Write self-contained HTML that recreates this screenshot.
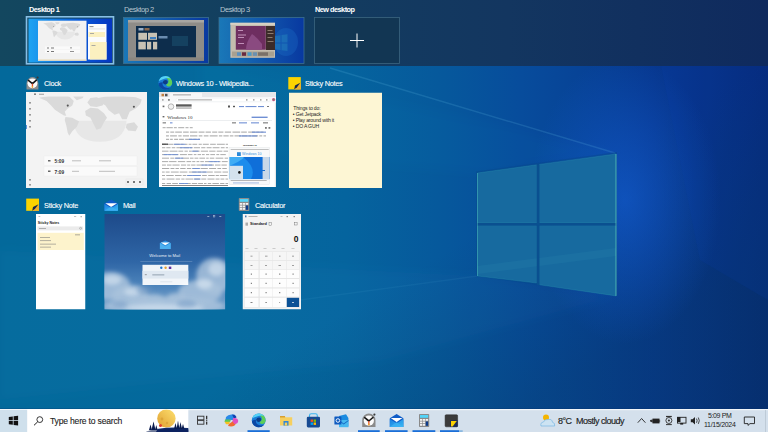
<!DOCTYPE html>
<html><head><meta charset="utf-8">
<style>
*{margin:0;padding:0;box-sizing:border-box}
html,body{width:768px;height:432px;overflow:hidden;background:#0a4f90;font-family:"Liberation Sans",sans-serif}
svg{position:absolute;left:0;top:0}
.dlabel{position:absolute;top:4.5px;font-size:7.5px;color:#b9c6cf;white-space:nowrap;letter-spacing:-0.45px}
.dlabel.b{color:#fff;font-weight:bold;letter-spacing:-0.5px;font-size:7.3px}
.wl{position:absolute;font-size:7.4px;color:#fff;white-space:nowrap;letter-spacing:-0.3px;-webkit-text-stroke:0.1px #fff}
#taskbar{position:absolute;left:0;top:409px;width:768px;height:23px;background:#d4e0ec}
</style></head><body>
<!-- WALLPAPER -->
<svg width="768" height="432" viewBox="0 0 768 432">
<defs>
<g id="edgeico">
<circle cx="7" cy="7" r="6.9" fill="#1a7ed8"/>
<path d="M7.6,0.2 A6.9,6.9 0 0 1 13.9,7.6 Q13,10.8 10.2,10.6 Q8.2,10.4 7.8,8.6 Q10,8 10.2,5.6 Q10.2,3.6 8.6,2.6 Z" fill="#5ccf58"/>
<path d="M0.4,5.2 Q1.8,0.4 7.2,0.2 Q10.8,0.3 12.2,2.6 Q9.6,1.8 6.8,2.6 Q3,3.6 0.4,5.2 Z" fill="#54d2f6"/>
<path d="M0.2,7.6 A6.9,6.9 0 0 0 12.4,11.4 Q8.4,13 5.6,11 Q3.6,9.2 4.4,6.4 Q2.2,6.4 0.2,7.6 Z" fill="#0b47a4"/>
<path d="M4.4,6.4 Q5,4.2 7.4,4.2 Q9.4,4.4 9.6,6.2 Q9.2,8.2 7.4,8.6 Q5.2,8.8 4.4,6.4 Z" fill="#0c3c88"/>
</g>
<g id="wmap">
<path d="M285,190 Q300,330 462,330 Q625,330 640,190 Z" fill="#e7e7e7"/>
<g fill="#dadada">
<path d="M60,38 L130,25 L220,15 L260,30 L290,60 L280,90 L250,110 L230,130 L240,158 L225,155 L200,140 L165,118 L140,90 L110,60 Z"/>
<path d="M280,15 L360,12 L350,40 L310,55 L290,35 Z"/>
<path d="M235,165 L280,170 L325,195 L310,230 L280,260 L260,290 L250,270 L240,220 L230,185 Z"/>
<path d="M380,70 L400,40 L440,35 L470,45 L500,60 L480,90 L440,100 L400,95 Z"/>
<path d="M365,125 L400,105 L450,110 L490,140 L510,170 L490,200 L470,240 L440,250 L420,210 L400,170 L370,155 Z"/>
<path d="M430,45 L500,30 L600,25 L700,35 L740,50 L730,80 L700,110 L660,130 L640,180 L610,180 L590,140 L560,150 L520,120 L500,90 Z"/>
<path d="M640,210 L690,200 L715,230 L700,260 L650,255 L635,235 Z"/>
</g>
<circle cx="250" cy="90" r="7" fill="#555"/>
<circle cx="688" cy="98" r="7" fill="#555"/>
</g>
<linearGradient id="g0" x1="0" y1="0" x2="768" y2="0" gradientUnits="userSpaceOnUse">
<stop offset="0" stop-color="#03699b"/>
<stop offset="0.3" stop-color="#04699d"/>
<stop offset="0.45" stop-color="#05649e"/>
<stop offset="0.57" stop-color="#06599c"/>
<stop offset="0.68" stop-color="#074c9c"/>
<stop offset="0.85" stop-color="#073890"/>
<stop offset="1" stop-color="#062a78"/>
</linearGradient>
<linearGradient id="gdark" x1="430" y1="260" x2="520" y2="410" gradientUnits="userSpaceOnUse">
<stop offset="0" stop-color="#063a5a" stop-opacity="0"/>
<stop offset="1" stop-color="#063a5a" stop-opacity="0.3"/>
</linearGradient>
<radialGradient id="glow" cx="625" cy="200" r="120" gradientUnits="userSpaceOnUse" gradientTransform="translate(625 200) scale(0.8 1.2) translate(-625 -200)">
<stop offset="0" stop-color="#1460d8" stop-opacity="0.6"/>
<stop offset="1" stop-color="#1460d8" stop-opacity="0"/>
</radialGradient>
<linearGradient id="beam" x1="0" y1="0" x2="620" y2="0" gradientUnits="userSpaceOnUse">
<stop offset="0" stop-color="#3ab0d0" stop-opacity="0.0"/>
<stop offset="0.7" stop-color="#3ab0d0" stop-opacity="0.06"/>
<stop offset="1" stop-color="#3ab0d0" stop-opacity="0.12"/>
</linearGradient>
</defs>
<rect width="768" height="432" fill="url(#g0)"/>
<rect width="768" height="432" fill="url(#gdark)"/>
<rect width="768" height="432" fill="url(#glow)"/>
<filter id="bblur" x="-10%" y="-30%" width="120%" height="160%"><feGaussianBlur stdDeviation="5"/></filter>
<polygon points="200,60 615,153 477.5,172 200,150" fill="#4ab0e0" fill-opacity="0.03" filter="url(#bblur)"/>
<polygon points="0,250 477.5,276 616,296 380,361 0,400" fill="#4ab0e0" fill-opacity="0.04" filter="url(#bblur)"/>
<polygon points="660,60 768,60 768,300 700,260" fill="#0a40c0" fill-opacity="0.12"/>
<line x1="330" y1="68" x2="615" y2="153" stroke="#6ac0e8" stroke-opacity="0.18" stroke-width="1.5"/>
<line x1="300" y1="300" x2="477.5" y2="276" stroke="#6ac0e8" stroke-opacity="0.08" stroke-width="1.5"/>
<polygon points="476,171.5 617,152 617,296 476,276" fill="#074a8c" fill-opacity="0.5"/>
<g fill="#176a9f" stroke="#45c2c0" stroke-opacity="0.3" stroke-width="0.6">
<polygon points="477.5,173 536.7,164.8 536.7,223 477.5,223"/>
<polygon points="539.4,164.4 616,154 616,223 539.4,223"/>
<polygon points="477.5,225.6 536.7,225.6 536.7,283 477.5,276"/>
<polygon points="539.4,225.6 616,225.6 616,295.9 539.4,284.8"/>
</g>
<polygon points="477.5,266 616,248 616,256 477.5,274" fill="#5ac8d0" fill-opacity="0.07"/>
<rect x="536.7" y="164.6" width="2.8" height="120.5" fill="#0a5090"/>
<rect x="477.2" y="223" width="139" height="2.6" fill="#0a5090"/>
<line x1="616" y1="154" x2="616" y2="295.9" stroke="#6ad8c0" stroke-opacity="0.6" stroke-width="1"/>
<line x1="477.5" y1="173" x2="477.5" y2="276" stroke="#5ad0c0" stroke-opacity="0.45" stroke-width="0.9"/>
</svg>
<!-- BAND -->
<svg width="768" height="66" viewBox="0 0 768 66">
<defs><linearGradient id="bandg" x1="0" y1="0" x2="768" y2="0" gradientUnits="userSpaceOnUse">
<stop offset="0" stop-color="#13475f"/><stop offset="0.66" stop-color="#133660"/><stop offset="1" stop-color="#0f2a5e"/>
</linearGradient></defs>
<rect width="768" height="66" fill="url(#bandg)"/>
</svg>

<div class="dlabel b" style="left:29px">Desktop 1</div>
<div class="dlabel" style="left:124px">Desktop 2</div>
<div class="dlabel" style="left:220px">Desktop 3</div>
<div class="dlabel b" style="left:315px">New desktop</div>

<!-- DESKTOP THUMBS -->
<svg width="768" height="66" viewBox="0 0 768 66">
<defs>
<linearGradient id="d1g" x1="0" y1="0" x2="1" y2="0"><stop offset="0" stop-color="#1ea4f2"/><stop offset="0.6" stop-color="#0a5ad8"/><stop offset="1" stop-color="#0536c0"/></linearGradient>
<linearGradient id="d2g" x1="0" y1="0" x2="1" y2="0"><stop offset="0" stop-color="#1a78b8"/><stop offset="1" stop-color="#0838a0"/></linearGradient>
</defs>
<!-- D1 -->
<rect x="26.5" y="16.8" width="87" height="47" fill="none" stroke="#86bfe6" stroke-width="1.6"/>
<rect x="28.5" y="18.6" width="83.5" height="44" fill="url(#d1g)"/>
<rect x="38" y="20.7" width="48.5" height="40" fill="#f2f2f2"/>
<use href="#wmap" transform="translate(39.9,21.5) scale(0.0546)"/>
<rect x="45" y="46.4" width="35" height="3" fill="#fafafa"/>
<rect x="45" y="50" width="35" height="3" fill="#fafafa"/>
<g fill="#777"><rect x="47" y="47.5" width="2" height="1"/><rect x="51" y="47.5" width="3" height="1"/><rect x="47" y="51" width="2" height="1"/><rect x="51" y="51" width="3" height="1"/><rect x="70" y="47.5" width="2" height="0.8"/><rect x="70" y="51" width="4" height="0.8"/></g>
<rect x="38" y="59.5" width="48.5" height="1.2" fill="#e8d8b0"/>
<rect x="88" y="24" width="18.5" height="35.5" fill="#fbfbfb"/>
<rect x="89.5" y="26.3" width="4" height="0.8" fill="#666"/>
<rect x="89" y="28.3" width="16" height="1.2" fill="#e6e6e6"/>
<rect x="88.5" y="32" width="16.5" height="5" fill="#fbf0c0"/>
<rect x="90" y="33" width="4" height="0.8" fill="#999"/>
<rect x="90" y="42" width="16.5" height="17.5" fill="#fbf0c0"/>
<rect x="91.5" y="45" width="4" height="0.8" fill="#999"/>
<!-- D2 -->
<rect x="123.5" y="17.5" width="85" height="46" fill="url(#d2g)" stroke="#3c7090" stroke-width="0.8"/>
<rect x="128" y="20" width="76" height="40.7" fill="#8e8c88"/>
<rect x="128" y="20" width="76" height="2.5" fill="#a8a6a2"/>
<rect x="136" y="26" width="60" height="31.5" fill="#0d2d4c"/>
<rect x="138.5" y="28" width="5" height="2.5" fill="#9ab0c8"/>
<rect x="144.5" y="28" width="5" height="2.5" fill="#8a6a50"/>
<rect x="138.3" y="32.8" width="8.7" height="7" fill="#c8c2b4"/>
<rect x="148" y="32.8" width="9" height="7" fill="#c8c2b4"/>
<rect x="150" y="37" width="6" height="2" fill="#4080c0"/>
<rect x="158.5" y="36" width="9" height="2.5" fill="#6a8cb0"/>
<rect x="138.3" y="41.8" width="7.5" height="7.6" fill="#c8c2b4"/>
<rect x="147" y="41.8" width="4.2" height="7.6" fill="#c8c2b4"/>
<rect x="153" y="41.8" width="4.2" height="7.6" fill="#c8c2b4"/>
<rect x="172" y="36" width="16" height="10" fill="#1a4a6a" fill-opacity="0.7"/>
<rect x="128" y="57.5" width="76" height="3.2" fill="#8a8680"/>
<!-- D3 -->
<rect x="219" y="17.5" width="85" height="46" fill="url(#d2g)" stroke="#3c7090" stroke-width="0.8"/>
<ellipse cx="286" cy="42" rx="12" ry="14" fill="#2a8ae0" fill-opacity="0.2"/>
<g fill="#2a90c0" fill-opacity="0.4"><polygon points="275,36 280.5,35.2 280.5,42.6 275,42.6"/><polygon points="281.5,35 287.5,34.2 287.5,42.6 281.5,42.6"/><polygon points="275,43.4 280.5,43.4 280.5,50 275,49.2"/><polygon points="281.5,43.4 287.5,43.4 287.5,51 281.5,50.2"/></g>
<rect x="230.4" y="22.8" width="44.6" height="35" fill="#c4bcae"/>
<rect x="230.4" y="22.8" width="44.6" height="2" fill="#d8d2c6"/>
<rect x="235.8" y="26" width="30" height="23.7" fill="#6e2e60"/>
<path d="M252,34 Q258,38 262,44 L262,49.7 L246,49.7 Q246,42 252,34 Z" fill="#8a4a80"/>
<g fill="#c090b8"><rect x="238" y="30" width="5" height="1"/><rect x="238" y="34.5" width="8" height="1"/><rect x="238" y="37" width="6" height="1"/><rect x="238" y="43" width="6" height="1"/></g>
<rect x="266" y="26" width="9" height="24" fill="#3c2c2a"/>
<g fill="#a09080"><rect x="267.5" y="30" width="5" height="0.8"/><rect x="267.5" y="33" width="6" height="0.8"/><rect x="267.5" y="37" width="5" height="0.8"/><rect x="267.5" y="41" width="6" height="0.8"/></g>
<rect x="232" y="51.5" width="42" height="5" fill="#a8a090"/>
<g><rect x="237" y="52.3" width="4" height="3.5" fill="#5a90c0"/><rect x="242" y="52.3" width="4" height="3.5" fill="#6a2a40"/><rect x="247.5" y="52.3" width="4" height="3.5" fill="#4a9ac8"/><rect x="253" y="52.3" width="4" height="3.5" fill="#6a90b0"/><rect x="258" y="52.3" width="10" height="3.5" fill="#7a7068"/></g>
<!-- New -->
<rect x="314.5" y="17.5" width="85" height="46" fill="#12344f" fill-opacity="0.7" stroke="#3c6680" stroke-width="0.8"/>
<line x1="350" y1="40.5" x2="364" y2="40.5" stroke="#fff" stroke-width="1"/>
<line x1="357" y1="33.5" x2="357" y2="47.5" stroke="#fff" stroke-width="1"/>
</svg>

<!-- WINDOW LABELS -->
<div class="wl" style="left:44px;top:79px">Clock</div>
<div class="wl" style="left:176px;top:79px">Windows 10 - Wikipedia...</div>
<div class="wl" style="left:305px;top:79px">Sticky Notes</div>
<div class="wl" style="left:44px;top:201px">Sticky Note</div>
<div class="wl" style="left:123px;top:201px">Mail</div>
<div class="wl" style="left:255px;top:201px">Calculator</div>

<!-- WINDOW THUMBS -->
<svg width="768" height="432" viewBox="0 0 768 432" font-family="Liberation Sans">
<defs>
<linearGradient id="wimg" x1="0" y1="0" x2="1" y2="1"><stop offset="0" stop-color="#8fd0f5"/><stop offset="0.45" stop-color="#1c8ee6"/><stop offset="1" stop-color="#0a58c0"/></linearGradient>
<linearGradient id="sky" x1="0" y1="0" x2="0" y2="1"><stop offset="0" stop-color="#1d4a8a"/><stop offset="0.5" stop-color="#2f66a6"/><stop offset="0.75" stop-color="#4d84bb"/><stop offset="1" stop-color="#7ea6cc"/></linearGradient>
<filter id="blur1" x="-20%" y="-20%" width="140%" height="140%"><feGaussianBlur stdDeviation="2.2"/></filter>
<filter id="blur05"><feGaussianBlur stdDeviation="0.5"/></filter>
</defs>

<!-- CLOCK -->
<svg x="26" y="92" width="121" height="96" viewBox="0 0 121 96">
<rect width="121" height="96" fill="#f3f3f3"/>

<use href="#wmap" transform="translate(4,0) scale(0.151)"/>
<rect x="0" y="0" width="121" height="4.5" fill="#f3f3f3"/>
<rect x="13" y="1.8" width="5" height="0.8" fill="#888"/>
<rect x="8" y="1.4" width="2" height="1.6" fill="#888"/>
<g fill="#9a9a9a">
<rect x="3" y="10" width="2" height="1.6"/><rect x="3" y="16" width="2" height="1.6"/><rect x="3" y="22" width="2" height="1.6"/><rect x="3" y="28" width="2" height="1.6"/><rect x="3" y="34" width="2" height="1.6"/><rect x="3" y="87" width="2" height="1.6"/><rect x="3" y="92" width="2" height="1.6"/>
</g>
<rect x="0" y="33" width="0.8" height="4" fill="#3a7bd5"/>
<rect x="18" y="64" width="93" height="9.5" fill="#fafafa" stroke="#ececec" stroke-width="0.4"/>
<rect x="18" y="74.5" width="93" height="9.5" fill="#fafafa" stroke="#ececec" stroke-width="0.4"/>
<g fill="#666"><rect x="22" y="68" width="2.5" height="1.5"/><rect x="22" y="78.5" width="2.5" height="1.5"/></g>
<text x="28.5" y="71" font-size="4.8" font-weight="bold" fill="#333">5:09</text>
<text x="28.5" y="81.5" font-size="4.8" font-weight="bold" fill="#333">7:09</text>
<g fill="#bdbdbd"><rect x="46" y="68.3" width="9" height="1"/><rect x="73" y="68.3" width="12" height="1"/><rect x="46" y="78.8" width="7" height="1"/><rect x="73" y="78.8" width="16" height="1"/></g>
<g fill="#777"><rect x="101" y="89" width="2" height="2"/><rect x="107" y="89" width="2" height="2"/><rect x="113" y="89" width="2" height="2"/></g>
<rect x="100" y="87" width="17" height="6" fill="none" stroke="#e2e2e2" stroke-width="0.4"/>
</svg>

<!-- WIKIPEDIA -->
<svg x="159" y="92" width="117" height="95" viewBox="0 0 117 95">
<rect width="117" height="95" fill="#fff"/>
<rect x="0" y="0" width="117" height="5.2" fill="#e6e8eb"/>
<rect x="10.6" y="0.8" width="32.4" height="4.4" fill="#f6f7f8"/>
<rect x="14" y="2.5" width="18" height="0.8" fill="#8a8a8a"/>
<rect x="2.5" y="1.8" width="2.5" height="2.5" fill="#c08040"/><rect x="6" y="1.8" width="2.5" height="2.5" fill="#555"/>
<rect x="0" y="5.2" width="117" height="5.2" fill="#f7f8f9"/>
<rect x="17" y="6.2" width="94" height="3.4" rx="1.7" fill="#ffffff" stroke="#e2e4e6" stroke-width="0.3"/>
<rect x="19" y="7.5" width="34" height="0.8" fill="#8a8a8a"/>
<g fill="#888"><rect x="3" y="7.3" width="1.6" height="1.2"/><rect x="9" y="7" width="1.8" height="1.8"/><rect x="87" y="7.3" width="1.5" height="1.2"/><rect x="94" y="7.3" width="1.5" height="1.2"/><rect x="101" y="7.3" width="1.5" height="1.2"/><rect x="107" y="7.3" width="1.5" height="1.2"/></g>
<circle cx="114.6" cy="7.6" r="1.6" fill="#d84a8a"/><circle cx="114.6" cy="7.6" r="0.8" fill="#4ab860"/>
<rect x="3.6" y="13.6" width="1.8" height="1.6" fill="#666"/>
<circle cx="12" cy="14.6" r="2.8" fill="#f0f0f0" stroke="#777" stroke-width="0.5"/>
<rect x="17" y="12.3" width="15.6" height="2.3" fill="#5a5a5a"/>
<rect x="17" y="15.5" width="15.6" height="1.1" fill="#9a9a9a"/>
<rect x="69" y="13.5" width="2" height="2" fill="#555"/><rect x="74" y="13.8" width="2" height="1.4" fill="#555"/>
<g fill="#6f8fd4"><rect x="80" y="14" width="5" height="1.1"/><rect x="86.5" y="14" width="11" height="1.1"/><rect x="99" y="14" width="6" height="1.1"/></g>
<rect x="108" y="14" width="2" height="1" fill="#777"/>
<rect x="3.6" y="24" width="1.8" height="1.4" fill="#666"/>
<text x="8.3" y="26.8" font-family="Liberation Serif" font-size="5" fill="#333">Windows 10</text>
<g fill="#6f8fd4"><rect x="92.6" y="24.6" width="16" height="1.4"/></g>
<line x1="3" y1="28.5" x2="113" y2="28.5" stroke="#d0d4d8" stroke-width="0.4"/>
<g fill="#777"><rect x="3.6" y="30.3" width="3.4" height="1.1"/><rect x="73" y="30.3" width="4" height="1.1"/></g>
<g fill="#6f8fd4"><rect x="11" y="30.3" width="2.5" height="1.1"/><rect x="80" y="30.3" width="8" height="1.1"/><rect x="92" y="30.3" width="8" height="1.1"/></g>
<rect x="104" y="30.3" width="5" height="1.1" fill="#777"/>
<g fill="#a8a8a8"><rect x="3.6" y="35.2" width="3.0" height="1.0"/><rect x="7.5" y="35.2" width="6.3" height="1.0"/><rect x="14.9" y="35.2" width="2.9" height="1.0"/><rect x="19.2" y="35.2" width="6.0" height="1.0"/><rect x="26.5" y="35.2" width="3.0" height="1.0"/><rect x="30.8" y="35.2" width="2.9" height="1.0"/></g>
<g fill="#777"><rect x="106" y="35" width="1.8" height="1.8"/><rect x="109.5" y="35" width="1.8" height="1.8"/></g>
<g fill="#a2a2a2"><rect x="7.0" y="39.6" width="3.1" height="1.0"/><rect x="11.3" y="39.6" width="3.9" height="1.0"/><rect x="16.2" y="39.6" width="6.7" height="1.0"/><rect x="24.1" y="39.6" width="5.6" height="1.0"/><rect x="30.9" y="39.6" width="7.5" height="1.0"/><rect x="39.6" y="39.6" width="5.9" height="1.0"/><rect x="46.6" y="39.6" width="5.3" height="1.0"/><rect x="53.2" y="39.6" width="5.0" height="1.0"/><rect x="59.3" y="39.6" width="5.1" height="1.0"/><rect x="65.8" y="39.6" width="6.3" height="1.0"/><rect x="73.5" y="39.6" width="7.7" height="1.0"/><rect x="82.2" y="39.6" width="5.6" height="1.0"/><rect x="89.2" y="39.6" width="7.1" height="1.0"/><rect x="97.3" y="39.6" width="3.2" height="1.0"/><rect x="101.5" y="39.6" width="2.9" height="1.0"/><rect x="7.0" y="43.4" width="2.9" height="1.0"/><rect x="11.1" y="43.4" width="6.8" height="1.0"/><rect x="19.3" y="43.4" width="3.3" height="1.0"/><rect x="23.9" y="43.4" width="6.1" height="1.0"/><rect x="31.0" y="43.4" width="7.4" height="1.0"/><rect x="39.7" y="43.4" width="3.7" height="1.0"/><rect x="44.8" y="43.4" width="4.7" height="1.0"/><rect x="50.7" y="43.4" width="7.9" height="1.0"/><rect x="59.9" y="43.4" width="3.4" height="1.0"/><rect x="64.4" y="43.4" width="5.3" height="1.0"/><rect x="70.8" y="43.4" width="3.6" height="1.0"/><rect x="75.5" y="43.4" width="6.5" height="1.0"/><rect x="82.9" y="43.4" width="5.5" height="1.0"/><rect x="89.5" y="43.4" width="2.6" height="1.0"/><rect x="93.2" y="43.4" width="5.9" height="1.0"/><rect x="100.3" y="43.4" width="2.9" height="1.0"/><rect x="104.5" y="43.4" width="2.5" height="1.0"/><rect x="7.0" y="46.8" width="3.1" height="1.0"/><rect x="11.1" y="46.8" width="2.7" height="1.0"/><rect x="15.1" y="46.8" width="4.0" height="1.0"/><rect x="20.1" y="46.8" width="4.8" height="1.0"/><rect x="26.2" y="46.8" width="7.0" height="1.0"/><rect x="34.3" y="46.8" width="3.3" height="1.0"/><rect x="39.0" y="46.8" width="2.0" height="1.0"/></g>
<g fill="#6f8fd4"><rect x="93" y="39.6" width="14" height="1.1"/><rect x="80" y="43.4" width="18" height="1.1"/><rect x="30" y="46.8" width="11" height="1.1"/></g>
<g fill="#a2a2a2"><rect x="3.0" y="51.8" width="4.3" height="0.9"/><rect x="8.3" y="51.8" width="6.1" height="0.9"/><rect x="15.3" y="51.8" width="5.4" height="0.9"/><rect x="21.8" y="51.8" width="2.8" height="0.9"/><rect x="25.8" y="51.8" width="2.7" height="0.9"/><rect x="29.6" y="51.8" width="2.9" height="0.9"/><rect x="33.4" y="51.8" width="4.8" height="0.9"/><rect x="39.6" y="51.8" width="3.2" height="0.9"/><rect x="43.8" y="51.8" width="6.0" height="0.9"/><rect x="51.1" y="51.8" width="5.7" height="0.9"/><rect x="57.9" y="51.8" width="7.9" height="0.9"/><rect x="66.7" y="51.8" width="2.3" height="0.9"/><rect x="3.0" y="55.3" width="3.3" height="0.9"/><rect x="7.3" y="55.3" width="4.2" height="0.9"/><rect x="12.8" y="55.3" width="3.5" height="0.9"/><rect x="17.4" y="55.3" width="6.0" height="0.9"/><rect x="24.5" y="55.3" width="5.5" height="0.9"/><rect x="31.0" y="55.3" width="2.8" height="0.9"/><rect x="34.8" y="55.3" width="6.2" height="0.9"/><rect x="42.2" y="55.3" width="4.2" height="0.9"/><rect x="47.6" y="55.3" width="5.0" height="0.9"/><rect x="53.6" y="55.3" width="6.9" height="0.9"/><rect x="61.8" y="55.3" width="3.8" height="0.9"/><rect x="66.8" y="55.3" width="2.2" height="0.9"/><rect x="3.0" y="58.7" width="6.5" height="0.9"/><rect x="10.6" y="58.7" width="7.9" height="0.9"/><rect x="19.4" y="58.7" width="4.8" height="0.9"/><rect x="25.5" y="58.7" width="3.3" height="0.9"/><rect x="30.0" y="58.7" width="2.7" height="0.9"/><rect x="33.9" y="58.7" width="6.7" height="0.9"/><rect x="41.8" y="58.7" width="7.3" height="0.9"/><rect x="50.2" y="58.7" width="6.3" height="0.9"/><rect x="57.7" y="58.7" width="5.7" height="0.9"/><rect x="64.5" y="58.7" width="4.5" height="0.9"/><rect x="3.0" y="62.2" width="5.1" height="0.9"/><rect x="9.3" y="62.2" width="2.8" height="0.9"/><rect x="13.4" y="62.2" width="6.1" height="0.9"/><rect x="20.9" y="62.2" width="7.0" height="0.9"/><rect x="28.9" y="62.2" width="4.6" height="0.9"/><rect x="34.8" y="62.2" width="2.6" height="0.9"/><rect x="38.6" y="62.2" width="3.4" height="0.9"/><rect x="42.9" y="62.2" width="2.8" height="0.9"/><rect x="47.0" y="62.2" width="3.2" height="0.9"/><rect x="51.3" y="62.2" width="4.7" height="0.9"/><rect x="57.3" y="62.2" width="2.9" height="0.9"/><rect x="61.3" y="62.2" width="5.5" height="0.9"/><rect x="3.0" y="65.7" width="7.0" height="0.9"/><rect x="11.3" y="65.7" width="4.0" height="0.9"/><rect x="16.5" y="65.7" width="4.5" height="0.9"/><rect x="22.3" y="65.7" width="7.8" height="0.9"/><rect x="31.0" y="65.7" width="3.5" height="0.9"/><rect x="35.5" y="65.7" width="3.8" height="0.9"/><rect x="40.4" y="65.7" width="5.7" height="0.9"/><rect x="47.2" y="65.7" width="2.5" height="0.9"/><rect x="50.8" y="65.7" width="4.5" height="0.9"/><rect x="56.6" y="65.7" width="7.7" height="0.9"/><rect x="65.6" y="65.7" width="3.4" height="0.9"/><rect x="3.0" y="69.2" width="6.2" height="0.9"/><rect x="10.1" y="69.2" width="7.4" height="0.9"/><rect x="18.9" y="69.2" width="7.3" height="0.9"/><rect x="27.5" y="69.2" width="4.7" height="0.9"/><rect x="33.2" y="69.2" width="3.1" height="0.9"/><rect x="37.5" y="69.2" width="2.8" height="0.9"/><rect x="41.3" y="69.2" width="3.6" height="0.9"/><rect x="45.9" y="69.2" width="4.4" height="0.9"/><rect x="51.2" y="69.2" width="2.5" height="0.9"/><rect x="54.7" y="69.2" width="3.1" height="0.9"/><rect x="58.9" y="69.2" width="2.6" height="0.9"/><rect x="62.8" y="69.2" width="5.9" height="0.9"/><rect x="3.0" y="72.6" width="3.9" height="0.9"/><rect x="8.0" y="72.6" width="4.5" height="0.9"/><rect x="13.4" y="72.6" width="7.2" height="0.9"/><rect x="22.0" y="72.6" width="5.1" height="0.9"/><rect x="28.2" y="72.6" width="3.0" height="0.9"/><rect x="32.1" y="72.6" width="4.4" height="0.9"/><rect x="37.5" y="72.6" width="7.1" height="0.9"/><rect x="45.6" y="72.6" width="2.6" height="0.9"/><rect x="49.6" y="72.6" width="5.4" height="0.9"/><rect x="56.0" y="72.6" width="5.5" height="0.9"/><rect x="62.4" y="72.6" width="5.4" height="0.9"/><rect x="3.0" y="76.1" width="7.2" height="0.9"/><rect x="11.5" y="76.1" width="3.9" height="0.9"/><rect x="16.5" y="76.1" width="3.4" height="0.9"/><rect x="21.2" y="76.1" width="5.4" height="0.9"/><rect x="27.9" y="76.1" width="4.3" height="0.9"/><rect x="33.3" y="76.1" width="7.0" height="0.9"/><rect x="41.6" y="76.1" width="7.2" height="0.9"/><rect x="50.1" y="76.1" width="7.0" height="0.9"/><rect x="58.4" y="76.1" width="3.7" height="0.9"/><rect x="63.3" y="76.1" width="4.5" height="0.9"/><rect x="3.0" y="79.6" width="2.7" height="0.9"/><rect x="6.7" y="79.6" width="3.9" height="0.9"/><rect x="11.9" y="79.6" width="7.8" height="0.9"/><rect x="20.7" y="79.6" width="7.7" height="0.9"/><rect x="29.8" y="79.6" width="7.8" height="0.9"/><rect x="38.6" y="79.6" width="3.7" height="0.9"/><rect x="43.4" y="79.6" width="3.6" height="0.9"/><rect x="47.9" y="79.6" width="5.9" height="0.9"/><rect x="55.2" y="79.6" width="7.1" height="0.9"/><rect x="63.5" y="79.6" width="5.5" height="0.9"/><rect x="3.0" y="83.1" width="3.0" height="0.9"/><rect x="7.2" y="83.1" width="7.5" height="0.9"/><rect x="16.0" y="83.1" width="6.6" height="0.9"/><rect x="23.8" y="83.1" width="3.5" height="0.9"/><rect x="28.5" y="83.1" width="4.3" height="0.9"/><rect x="34.2" y="83.1" width="7.8" height="0.9"/><rect x="43.1" y="83.1" width="4.7" height="0.9"/><rect x="49.2" y="83.1" width="6.5" height="0.9"/><rect x="56.7" y="83.1" width="3.2" height="0.9"/><rect x="60.8" y="83.1" width="7.5" height="0.9"/><rect x="3.0" y="86.6" width="3.3" height="0.9"/><rect x="7.6" y="86.6" width="7.9" height="0.9"/><rect x="16.7" y="86.6" width="4.4" height="0.9"/><rect x="22.3" y="86.6" width="3.2" height="0.9"/><rect x="26.5" y="86.6" width="7.8" height="0.9"/><rect x="35.5" y="86.6" width="5.4" height="0.9"/><rect x="42.3" y="86.6" width="4.9" height="0.9"/><rect x="48.5" y="86.6" width="7.0" height="0.9"/><rect x="56.6" y="86.6" width="3.9" height="0.9"/><rect x="61.5" y="86.6" width="3.8" height="0.9"/><rect x="66.5" y="86.6" width="2.5" height="0.9"/><rect x="3.0" y="91" width="3.2" height="0.9"/><rect x="7.6" y="91" width="4.4" height="0.9"/><rect x="13.2" y="91" width="5.7" height="0.9"/><rect x="20.2" y="91" width="4.8" height="0.9"/><rect x="26.4" y="91" width="5.3" height="0.9"/><rect x="32.8" y="91" width="5.4" height="0.9"/><rect x="39.1" y="91" width="4.9" height="0.9"/><rect x="45.0" y="91" width="2.5" height="0.9"/><rect x="48.8" y="91" width="3.4" height="0.9"/><rect x="53.4" y="91" width="6.5" height="0.9"/><rect x="61.1" y="91" width="4.3" height="0.9"/><rect x="66.5" y="91" width="2.5" height="0.9"/></g>
<g fill="#6f8fd4"><rect x="14.9" y="51.8" width="11.4" height="0.9"/><rect x="21.0" y="55.3" width="12.0" height="0.9"/><rect x="32.8" y="58.7" width="6.7" height="0.9"/><rect x="4.6" y="62.2" width="14.4" height="0.9"/><rect x="15.9" y="65.7" width="8.3" height="0.9"/><rect x="49.8" y="69.2" width="10.7" height="0.9"/><rect x="42.5" y="72.6" width="10.8" height="0.9"/><rect x="33.4" y="76.1" width="7.5" height="0.9"/><rect x="33.2" y="79.6" width="14.7" height="0.9"/><rect x="28.1" y="83.1" width="13.4" height="0.9"/><rect x="34.9" y="86.6" width="6.6" height="0.9"/><rect x="20" y="91" width="9" height="0.9"/></g>
<rect x="3" y="51.6" width="6" height="1.2" fill="#444"/>
<text x="91" y="54.2" font-size="2.4" font-weight="bold" fill="#333" text-anchor="middle">Windows 10</text>
<rect x="70" y="55.3" width="40.6" height="37.5" fill="#f8f9fa" stroke="#d8dadc" stroke-width="0.3"/>
<rect x="71.7" y="57.2" width="38" height="0.6" fill="#999"/>
<rect x="78" y="60.2" width="3.8" height="3.8" fill="#2a88d8"/>
<text x="83" y="63.4" font-size="3.6" fill="#3a94e0">Windows 10</text>
<rect x="70.6" y="65" width="40" height="22.1" fill="#1c8cec"/>
<path d="M70.6,65 L86,65 Q80,70 70.6,73.8 Z" fill="#48b4f6" fill-opacity="0.8"/>
<path d="M84,65 L110.6,65 L110.6,87.1 L92,87.1 Q98,76 84,65 Z" fill="#0a62d2" fill-opacity="0.7"/>
<rect x="103.6" y="65" width="7" height="22.1" fill="#c8d8e8"/>
<rect x="70.6" y="73.8" width="13.4" height="13.3" fill="#d4e2ee"/>
<circle cx="80.4" cy="80.4" r="1.3" fill="#111"/>
<rect x="103" y="78" width="3" height="1" fill="#1a70d0"/>
<g fill="#999"><rect x="71.7" y="88.3" width="36" height="0.7"/></g>
<g fill="#7f9fd8"><rect x="74" y="90.6" width="26" height="0.7"/></g>
<rect x="3" y="93" width="66" height="0.8" fill="#6a6a6a"/>
<rect x="115.8" y="10.5" width="1.2" height="84.5" fill="#e8e8e8"/>
</svg>

<!-- STICKY NOTES BIG -->
<svg x="289" y="92.5" width="93" height="95.5" viewBox="0 0 93 95.5">
<rect width="93" height="95.5" fill="#fdf6d4"/>
<g font-size="5.1" fill="#262626" letter-spacing="-0.17">
<text x="4.2" y="17.6">Things to do:</text>
<text x="3.8" y="23.4">• Get Jetpack</text>
<text x="3.8" y="29.2">• Play around with it</text>
<text x="3.8" y="35">• DO A GUH</text>
</g>
</svg>

<!-- STICKY NOTE SMALL -->
<svg x="36" y="214" width="49.5" height="95.5" viewBox="0 0 49.5 95.5">
<rect width="49.5" height="95.5" fill="#fff"/>
<g fill="#999"><rect x="2.5" y="2.4" width="1.8" height="0.6"/><rect x="38" y="2.4" width="2.2" height="0.6"/><rect x="44.5" y="2.2" width="1.4" height="1"/></g>
<text x="1.8" y="10" font-size="3.6" font-weight="bold" fill="#222">Sticky Notes</text>
<rect x="1.5" y="12.4" width="45.5" height="4" fill="#ebebeb"/>
<rect x="3" y="14.2" width="7" height="0.6" fill="#888"/>
<circle cx="44.6" cy="14.3" r="1" fill="none" stroke="#777" stroke-width="0.4"/>
<rect x="1.5" y="18.8" width="46.3" height="17.2" fill="#fdf3cc"/>
<rect x="39" y="20.6" width="5" height="0.6" fill="#777"/>
<g fill="#777"><rect x="4" y="23.3" width="10" height="0.55"/><rect x="4" y="26.5" width="11" height="0.55"/><rect x="4" y="29.8" width="16" height="0.55"/><rect x="4" y="32.8" width="11" height="0.55"/></g>
</svg>

<!-- MAIL -->
<svg x="104.3" y="214" width="121" height="95.5" viewBox="0 0 121 95.5">
<rect width="121" height="95.5" fill="url(#sky)"/>
<g fill="#a9c2dc" filter="url(#blur1)" fill-opacity="0.85">
<ellipse cx="6" cy="72" rx="20" ry="14"/>
<ellipse cx="26" cy="82" rx="18" ry="11"/>
<ellipse cx="110" cy="62" rx="18" ry="18"/>
<ellipse cx="96" cy="78" rx="22" ry="12"/>
<ellipse cx="60" cy="92" rx="60" ry="9"/>
<ellipse cx="48" cy="86" rx="14" ry="6"/>
<ellipse cx="72" cy="84" rx="10" ry="5"/>
</g>
<g fill="#e2ecf5" fill-opacity="0.55" filter="url(#blur1)">
<ellipse cx="112" cy="55" rx="8" ry="7"/>
<ellipse cx="100" cy="70" rx="8" ry="5"/>
<ellipse cx="8" cy="66" rx="9" ry="5"/>
<ellipse cx="28" cy="78" rx="8" ry="4"/>
<ellipse cx="60" cy="94" rx="40" ry="4"/>
</g>
<g fill="#6f98c4" fill-opacity="0.5" filter="url(#blur1)">
<ellipse cx="40" cy="76" rx="8" ry="4"/>
<ellipse cx="82" cy="90" rx="10" ry="4"/>
<ellipse cx="16" cy="90" rx="8" ry="3"/>
</g>
<g fill="#cfdaea"><rect x="103" y="2" width="2" height="0.6"/><rect x="109" y="1.6" width="1.6" height="1.4" fill="none" stroke="#cfdaea" stroke-width="0.4"/><rect x="115" y="2" width="2" height="0.6"/></g>
<path d="M55.6,29 L61,26.5 L66.4,29 L66.4,35 L55.6,35 Z" fill="#2a8fe0"/>
<path d="M55.6,29 L61,32.2 L66.4,29 L66.4,35 L55.6,35 Z" fill="#4cb0f0"/>
<path d="M56.5,28.6 L65.5,28.6 L61,31.3 Z" fill="#fff"/>
<text x="60.5" y="43" font-size="4.2" fill="#e8eef6" text-anchor="middle">Welcome to Mail</text>
<rect x="36" y="47.2" width="52" height="0.6" fill="#a8c0dc" fill-opacity="0.5"/>
<rect x="38.2" y="50.8" width="45.8" height="20.2" fill="#ffffff" fill-opacity="0.93"/>
<rect x="38.2" y="56.8" width="45.8" height="7.8" fill="#dfe8f1"/>
<circle cx="57" cy="53.8" r="1.2" fill="#1e78d0"/>
<circle cx="61.3" cy="53.8" r="1.2" fill="#e8a030"/>
<rect x="64.5" y="52.6" width="2.5" height="2.4" fill="#6030a0"/>
<rect x="40.5" y="60.5" width="2" height="0.6" fill="#666"/>
<rect x="48" y="60.5" width="12" height="0.8" fill="#8090a0"/>
<rect x="56" y="67.5" width="12" height="0.7" fill="#d4dbe3"/>
</svg>

<!-- CALCULATOR -->
<svg x="242.5" y="214" width="58.5" height="95.5" viewBox="0 0 58.5 95.5">
<rect width="58.5" height="95.5" fill="#f3f3f3"/>
<rect x="2.5" y="1.5" width="1.5" height="1.8" fill="#4a7ab0"/>
<rect x="6" y="2.2" width="9" height="0.6" fill="#888"/>
<g fill="#888"><rect x="38" y="2.2" width="2" height="0.5"/><rect x="44" y="2" width="1.5" height="1.2"/><rect x="51" y="2" width="1.5" height="1.2"/></g>
<g fill="#555"><rect x="3" y="8.8" width="2.5" height="0.5"/><rect x="3" y="9.8" width="2.5" height="0.5"/><rect x="3" y="10.8" width="2.5" height="0.5"/></g>
<text x="7.5" y="11.3" font-size="3.9" font-weight="bold" fill="#222">Standard</text>
<rect x="26.5" y="8.6" width="2.4" height="2.6" fill="none" stroke="#666" stroke-width="0.4"/>
<rect x="52" y="8.2" width="2.6" height="2.8" fill="none" stroke="#666" stroke-width="0.4"/>
<text x="56" y="28" font-size="8.5" font-weight="bold" fill="#111" text-anchor="end">0</text>
<g fill="#b0b0b0"><rect x="3" y="34.3" width="3" height="0.6"/><rect x="12" y="34.3" width="3" height="0.6"/><rect x="21" y="34.3" width="3" height="0.6"/><rect x="30" y="34.3" width="3" height="0.6"/><rect x="39" y="34.3" width="3" height="0.6"/><rect x="49" y="34.3" width="3" height="0.6"/></g>
<rect x="1.5" y="37.3" width="55.7" height="56.3" fill="#e6e6e6"/>
<g fill="#f6f6f6">
<rect x="2.1" y="37.9" width="13.9" height="8.3"/><rect x="17.2" y="37.9" width="12.8" height="8.3"/><rect x="30.4" y="37.9" width="13.5" height="8.3"/><rect x="44.3" y="37.9" width="12.3" height="8.3"/>
<rect x="2.1" y="47" width="13.9" height="8.5"/><rect x="17.2" y="47" width="12.8" height="8.5"/><rect x="30.4" y="47" width="13.5" height="8.5"/><rect x="44.3" y="47" width="12.3" height="8.5"/>
</g>
<g fill="#fdfdfd">
<rect x="2.1" y="56" width="13.9" height="8"/><rect x="17.2" y="56" width="12.8" height="8"/><rect x="30.4" y="56" width="13.5" height="8"/><rect x="44.3" y="56" width="12.3" height="8"/>
<rect x="2.1" y="65" width="13.9" height="8.4"/><rect x="17.2" y="65" width="12.8" height="8.4"/><rect x="30.4" y="65" width="13.5" height="8.4"/><rect x="44.3" y="65" width="12.3" height="8.4"/>
<rect x="2.1" y="74.5" width="13.9" height="8.1"/><rect x="17.2" y="74.5" width="12.8" height="8.1"/><rect x="30.4" y="74.5" width="13.5" height="8.1"/><rect x="44.3" y="74.5" width="12.3" height="8.1"/>
<rect x="2.1" y="83.8" width="13.9" height="9.2"/><rect x="17.2" y="83.8" width="12.8" height="9.2"/><rect x="30.4" y="83.8" width="13.5" height="9.2"/>
</g>
<rect x="44.3" y="83.8" width="12.3" height="9.2" fill="#0b5196"/>
<g fill="#666">
<rect x="8" y="41.8" width="2" height="0.6"/><rect x="22.5" y="41.8" width="2.5" height="0.6"/><rect x="36.5" y="41.8" width="1.5" height="0.6"/><rect x="49.5" y="41.8" width="2" height="0.6"/>
<rect x="8" y="51" width="2" height="0.6"/><rect x="22.5" y="51" width="2" height="0.6"/><rect x="36" y="51" width="2.5" height="0.6"/><rect x="49.5" y="51" width="2" height="0.6"/>
<rect x="8.3" y="59.6" width="1.2" height="1"/><rect x="23" y="59.6" width="1.2" height="1"/><rect x="36.6" y="59.6" width="1.2" height="1"/><rect x="50" y="59.6" width="1.2" height="1"/>
<rect x="8.3" y="68.8" width="1.2" height="1"/><rect x="23" y="68.8" width="1.2" height="1"/><rect x="36.6" y="68.8" width="1.2" height="1"/><rect x="50" y="68.8" width="1.2" height="1"/>
<rect x="8.3" y="78.2" width="1.2" height="1"/><rect x="23" y="78.2" width="1.2" height="1"/><rect x="36.6" y="78.2" width="1.2" height="1"/><rect x="50" y="78.2" width="1.2" height="1"/>
<rect x="8" y="88" width="2" height="0.8"/><rect x="23" y="88" width="1.2" height="1"/><rect x="36.8" y="88.2" width="0.8" height="0.8"/>
</g>
<rect x="49.5" y="88" width="2" height="0.8" fill="#dde8f3"/>
</svg>
</svg>

<!-- WINDOW ICONS -->
<svg width="768" height="432" viewBox="0 0 768 432">
<defs>
<linearGradient id="edgeg" x1="0" y1="0" x2="1" y2="1"><stop offset="0" stop-color="#37c0f0"/><stop offset="0.6" stop-color="#1a7ad8"/><stop offset="1" stop-color="#0c3f9a"/></linearGradient>
<linearGradient id="mailg" x1="0" y1="0" x2="1" y2="1"><stop offset="0" stop-color="#1a7ee0"/><stop offset="1" stop-color="#38b8f4"/></linearGradient>
</defs>
<!-- clock icon -->
<g id="clockico">
<path d="M26.5,83.5 A5.95,6.4 0 0 1 38.4,83.5 L38.4,89.6 L26.5,89.6 Z" fill="#8c8c8c"/>
<circle cx="37.6" cy="77.6" r="1.1" fill="#3a3a3a"/>
<circle cx="32.45" cy="83.3" r="4.9" fill="#fbfbfb"/>
<path d="M28.4,80.4 L32.45,83.6 L36.4,80.2" fill="none" stroke="#151515" stroke-width="1.6" stroke-linecap="round" stroke-linejoin="round"/>
<path d="M32.45,83.6 L32.45,87.6" stroke="#e4502a" stroke-width="1.3"/>
<path d="M32.45,86 L32.45,87.6" stroke="#f0b020" stroke-width="1.3"/>
</g>
<!-- edge -->
<use href="#edgeico" transform="translate(158.3,75.8)"/>
<!-- sticky notes icon -->
<rect x="288.3" y="77.1" width="12.5" height="12.3" fill="#fbd300"/>
<path d="M294.3,89.4 L300.8,83 L300.8,89.4 Z" fill="#eeae2e"/>
<path d="M294.2,89.3 L295,85.6 L300.3,82.8 L296.8,87.6 Z" fill="#17264e"/>
<rect x="26.2" y="198.6" width="12.8" height="12.2" fill="#fbd300"/>
<path d="M32.3,210.8 L39,204.4 L39,210.8 Z" fill="#eeae2e"/>
<path d="M32.2,210.7 L33,207 L38.5,204.2 L34.9,209 Z" fill="#17264e"/>
<!-- mail icon -->
<path d="M104.4,203.5 L111.2,199.4 L118,203.5 L118,210.8 L104.4,210.8 Z" fill="#0f5cc8"/>
<path d="M105.3,203.2 L117.1,203.2 L111.2,207 Z" fill="#ffffff"/>
<path d="M104.4,204 L111.2,208 L118,204 L118,210.8 L104.4,210.8 Z" fill="url(#mailg)"/>
<path d="M104.4,210.8 L111.2,206.5 L118,210.8 Z" fill="#3fb5f5" fill-opacity="0.7"/>
<!-- calc icon -->
<rect x="238.8" y="198" width="10.5" height="13" rx="0.8" fill="#8c8c8c"/>
<rect x="239.8" y="199" width="8.5" height="2.8" fill="#52d4f8"/>
<g fill="#f2f2f2"><rect x="239.8" y="203" width="2.4" height="1.8"/><rect x="242.8" y="203" width="2.4" height="1.8"/><rect x="245.8" y="203" width="2.4" height="1.8"/><rect x="239.8" y="205.5" width="2.4" height="1.8"/><rect x="242.8" y="205.5" width="2.4" height="1.8"/><rect x="239.8" y="208" width="2.4" height="1.8"/><rect x="242.8" y="208" width="2.4" height="1.8"/></g>
<rect x="245.8" y="205.5" width="2.4" height="4.3" fill="#0d3c8c"/>
</svg>

<!-- TASKBAR -->
<div id="taskbar"></div>
<svg width="768" height="432" viewBox="0 0 768 432">
<defs>
<linearGradient id="moong" x1="0" y1="1" x2="1" y2="0"><stop offset="0" stop-color="#e0a030"/><stop offset="1" stop-color="#fde070"/></linearGradient>
<linearGradient id="edgeg2" x1="0" y1="0" x2="1" y2="1"><stop offset="0" stop-color="#37c0f0"/><stop offset="0.6" stop-color="#1a7ad8"/><stop offset="1" stop-color="#0c3f9a"/></linearGradient>
<linearGradient id="mailg2" x1="0" y1="0" x2="1" y2="1"><stop offset="0" stop-color="#1a7ee0"/><stop offset="1" stop-color="#38b8f4"/></linearGradient>
<clipPath id="tbclip"><rect x="0" y="409.5" width="768" height="22.5"/></clipPath>
</defs>
<rect x="0" y="408.5" width="768" height="1" fill="#03306a" fill-opacity="0.5"/>
<rect x="0" y="409" width="768" height="1.2" fill="#f2f6fa"/>
<rect x="0" y="410" width="27.2" height="22" fill="#cfe0ec"/>
<rect x="27.2" y="409.2" width="161.1" height="22.8" fill="#ffffff"/>
<!-- start logo -->
<g fill="#111">
<path d="M8.8,417 L12.8,416.4 L12.8,420.2 L8.8,420.2 Z"/>
<path d="M13.6,416.3 L18.1,415.7 L18.1,420.2 L13.6,420.2 Z"/>
<path d="M8.8,421 L12.8,421 L12.8,424.8 L8.8,424.3 Z"/>
<path d="M13.6,421 L18.1,421 L18.1,425.4 L13.6,424.9 Z"/>
</g>
<!-- search icon -->
<circle cx="39.8" cy="419.6" r="2.9" fill="none" stroke="#222" stroke-width="0.9"/>
<line x1="37.7" y1="421.8" x2="34" y2="425.3" stroke="#222" stroke-width="1"/>
<!-- moon graphic -->
<g clip-path="url(#tbclip)">
<circle cx="166.4" cy="418.4" r="9.2" fill="url(#moong)"/>
<circle cx="162" cy="419" r="1.4" fill="#d49a30" fill-opacity="0.6"/>
<circle cx="167" cy="423" r="1.2" fill="#d49a30" fill-opacity="0.6"/>
<circle cx="160.5" cy="425.5" r="1.5" fill="#e04030"/>
<path d="M146,432 Q160,426 188.3,428 L188.3,432 Z" fill="#102a6a"/>
<path d="M150,432 Q165,427.5 188.3,429.5 L188.3,432 Z" fill="#0c2260"/>
<path d="M146,432 Q150,429 158,428.5 L156,432 Z" fill="#9aa0b0" fill-opacity="0.7"/>
<g fill="#0a1c50">
<path d="M149,430 L150.5,424.5 L152,430 Z"/><path d="M151.5,430 L153.5,421.5 L155.5,430 Z"/><path d="M155,430 L156.3,425 L157.6,430 Z"/>
<path d="M174,429 L175.5,423 L177,429 Z"/><path d="M176.5,429 L178,420.8 L179.5,429 Z"/><path d="M179,429 L180.5,422 L182,429 Z"/><path d="M181.5,429 L183,424 L184.5,429 Z"/>
</g>
</g>
<!-- task view -->
<g fill="none" stroke="#333" stroke-width="0.9">
<rect x="197.5" y="416.2" width="6.4" height="3.6"/>
<rect x="197.5" y="420.6" width="6.4" height="3.6"/>
</g>
<rect x="206" y="415.8" width="1.3" height="3.6" fill="#333"/><rect x="206" y="420.2" width="1.3" height="1.2" fill="#333"/><rect x="206" y="422" width="1.3" height="2.6" fill="#333"/>
<!-- copilot -->
<g>
<path d="M226,417 Q228,414.3 232,414.5 L235,414.8 L233,420 L225.5,420 Z" fill="#2a8ae8"/>
<path d="M232,414.5 Q236,414.5 236.5,417.5 L234,418.5 Z" fill="#1040b0"/>
<path d="M225,419.5 L231,419.5 L230,422 L224.6,422 Z" fill="#58c858"/>
<path d="M224.6,421.8 L230,421.8 L229,424.3 L226,424.3 Z" fill="#f8c020"/>
<path d="M229,424 L233,421 L236,423 Q235,426.5 231,426.5 L228,426 Z" fill="#f06a30"/>
<path d="M233,418 Q238.2,417.5 238.2,421 Q238,424 234.5,424 L232.5,421.5 Z" fill="#e050c0"/>
</g>
<!-- edge -->
<use href="#edgeico" transform="translate(251.7,413.3)"/>
<rect x="247.5" y="430.2" width="22.2" height="1.8" fill="#1a6fd8"/>
<!-- folder -->
<path d="M280,416 L284.5,416 L285.8,417.2 L292.2,417.2 L292.2,425.6 L280,425.6 Z" fill="#f6cf5e"/>
<rect x="280" y="416" width="5" height="1.5" fill="#d8a030"/>
<rect x="283.5" y="421" width="5" height="4.6" fill="#2f86d8"/>
<rect x="284.8" y="422.6" width="2.4" height="3" fill="#f6cf5e"/>
<!-- store -->
<path d="M309.5,417 L309.5,415.5 Q309.5,413.8 311.3,413.8 L315.5,413.8 Q317.3,413.8 317.3,415.5 L317.3,417" fill="none" stroke="#3ab4f0" stroke-width="1.1"/>
<rect x="306.8" y="416.8" width="13.2" height="10.6" rx="1.3" fill="#174a92"/>
<rect x="310.6" y="419.5" width="2.4" height="2.4" fill="#f25022"/><rect x="313.6" y="419.5" width="2.4" height="2.4" fill="#7fba00"/>
<rect x="310.6" y="422.5" width="2.4" height="2.4" fill="#00a4ef"/><rect x="313.6" y="422.5" width="2.4" height="2.4" fill="#ffb900"/>
<!-- outlook -->
<path d="M339,416 L346,414.2 L348.4,418 L348.4,426.4 L339,426.4 Z" fill="#1a8be0"/>
<path d="M339,420 L348.4,420 L348.4,427.2 L339,427.2 Z" fill="#47b8f0"/>
<path d="M339,420 L343.7,423.5 L348.4,420 L348.4,421 L343.7,424.5 L339,421 Z" fill="#1466c0"/>
<rect x="334.4" y="416.5" width="7" height="8" rx="0.6" fill="#0f5bc0"/>
<circle cx="337.9" cy="420.5" r="1.8" fill="none" stroke="#fff" stroke-width="0.9"/>
<!-- clock -->
<path d="M362.2,420.5 A6.65,6.9 0 0 1 375.5,420.5 L375.5,427 L362.2,427 Z" fill="#8a8a8a"/>
<circle cx="374.4" cy="414.6" r="1.1" fill="#3a3a3a"/>
<circle cx="368.85" cy="420.7" r="5.1" fill="#fbfbfb"/>
<path d="M364.7,417.7 L368.85,421 L372.9,417.5" fill="none" stroke="#151515" stroke-width="1.6" stroke-linecap="round" stroke-linejoin="round"/>
<path d="M368.85,421 L368.85,425.2" stroke="#e4502a" stroke-width="1.3"/>
<path d="M368.85,423.6 L368.85,425.2" stroke="#f0b020" stroke-width="1.3"/>
<rect x="358" y="430.2" width="21.7" height="1.8" fill="#1a6fd8"/>
<!-- mail -->
<path d="M389.8,418.3 L396.6,413.9 L403.4,418.3 L403.4,426.9 L389.8,426.9 Z" fill="#0f5cc8"/>
<path d="M390.7,418 L402.5,418 L396.6,422 Z" fill="#fff"/>
<path d="M389.8,419 L396.6,423.2 L403.4,419 L403.4,426.9 L389.8,426.9 Z" fill="url(#mailg2)"/>
<path d="M389.8,426.9 L396.6,422 L403.4,426.9 Z" fill="#3fb5f5" fill-opacity="0.7"/>
<rect x="385" y="430.2" width="22.6" height="1.8" fill="#1a6fd8"/>
<!-- calc -->
<rect x="419" y="414" width="10.2" height="13" rx="0.8" fill="#8a8a8a"/>
<rect x="420" y="415" width="8.2" height="2.8" fill="#52d4f8"/>
<g fill="#f2f2f2"><rect x="420" y="419" width="2.3" height="1.8"/><rect x="422.9" y="419" width="2.3" height="1.8"/><rect x="425.8" y="419" width="2.3" height="1.8"/><rect x="420" y="421.5" width="2.3" height="1.8"/><rect x="422.9" y="421.5" width="2.3" height="1.8"/><rect x="420" y="424" width="2.3" height="1.8"/><rect x="422.9" y="424" width="2.3" height="1.8"/></g>
<rect x="425.8" y="421.5" width="2.3" height="4.3" fill="#0d3c8c"/>
<rect x="412.5" y="430.2" width="22.8" height="1.8" fill="#1a6fd8"/>
<!-- sticky -->
<rect x="445.1" y="414.8" width="12.5" height="12" rx="1" fill="#3b3b3b" stroke="#262626" stroke-width="0.5"/>
<path d="M450.3,420.3 L457.6,420.3 L457.6,426.8 L450.3,426.8 Z" fill="#1a2a58"/>
<path d="M451,421 L456.8,421 L452.6,426.4 L451,426.4 Z" fill="#fbd000"/>
<rect x="440" y="430.2" width="19" height="1.8" fill="#1a6fd8"/>
<rect x="459" y="430.2" width="3.7" height="1.8" fill="#8ab8e0"/>
<!-- weather -->
<circle cx="546" cy="417.5" r="3" fill="#f4b400"/>
<path d="M541,426 Q540,422.5 543.5,422 Q544.5,418.8 548.5,419.5 Q552,418.8 552.5,422.3 Q555,422.6 554.7,426 Z" fill="#cde3f2" stroke="#6ab0e0" stroke-width="0.6"/>
<!-- chevron -->
<path d="M637.8,422.7 L641.6,418.5 L645.4,422.7" fill="none" stroke="#222" stroke-width="0.9"/>
<!-- battery -->
<rect x="652.5" y="418.6" width="7" height="4.8" fill="#222"/>
<rect x="659.5" y="419.8" width="0.6" height="2.4" fill="#222"/>
<path d="M650,420 L652.8,419.5 L652.8,422.5 L650.3,421.8 Z" fill="#333"/>
<!-- mic/webcam -->
<rect x="666" y="415.9" width="5.8" height="1.2" fill="#333"/>
<circle cx="668.9" cy="420.5" r="3" fill="none" stroke="#333" stroke-width="0.9"/>
<circle cx="668.9" cy="420.5" r="1.1" fill="#333"/>
<rect x="666" y="424.1" width="5.8" height="1" fill="#333"/>
<!-- network -->
<rect x="677.5" y="417.3" width="8.5" height="5.8" fill="none" stroke="#222" stroke-width="0.9"/>
<rect x="680.2" y="423" width="3" height="1.6" fill="#222"/>
<rect x="677" y="417" width="3.5" height="5" fill="#222"/>
<!-- volume -->
<path d="M690.8,419.2 L692.6,419.2 L695,417 L695,424.4 L692.6,422.2 L690.8,422.2 Z" fill="#222"/>
<path d="M696.5,418.6 Q697.8,420.7 696.5,422.8" fill="none" stroke="#222" stroke-width="0.8"/>
<path d="M698.3,417.5 Q700.3,420.7 698.3,423.9" fill="none" stroke="#222" stroke-width="0.8"/>
<!-- notification -->
<path d="M744.3,417 L754.5,417 L754.5,423.6 L750,423.6 L748,425.4 L748,423.6 L744.3,423.6 Z" fill="none" stroke="#222" stroke-width="0.9"/>
<rect x="765" y="410" width="0.8" height="22" fill="#b8c6d2"/>
</svg>
<div style="position:absolute;left:50px;top:416px;font-size:8.6px;color:#222;white-space:nowrap;letter-spacing:-0.2px;-webkit-text-stroke:0.1px #222">Type here to search</div>
<div style="position:absolute;left:558px;top:415.5px;font-size:9px;color:#222;white-space:nowrap;letter-spacing:-0.5px;-webkit-text-stroke:0.15px #222">8°C</div>
<div style="position:absolute;left:576px;top:415.5px;font-size:9px;color:#222;white-space:nowrap;letter-spacing:-0.5px;-webkit-text-stroke:0.15px #222">Mostly cloudy</div>
<div style="position:absolute;left:708px;top:411.5px;font-size:7px;color:#222;white-space:nowrap;letter-spacing:-0.38px">5:09 PM</div>
<div style="position:absolute;left:704px;top:420.8px;font-size:7px;color:#222;white-space:nowrap;letter-spacing:-0.3px">11/15/2024</div>
</body></html>
